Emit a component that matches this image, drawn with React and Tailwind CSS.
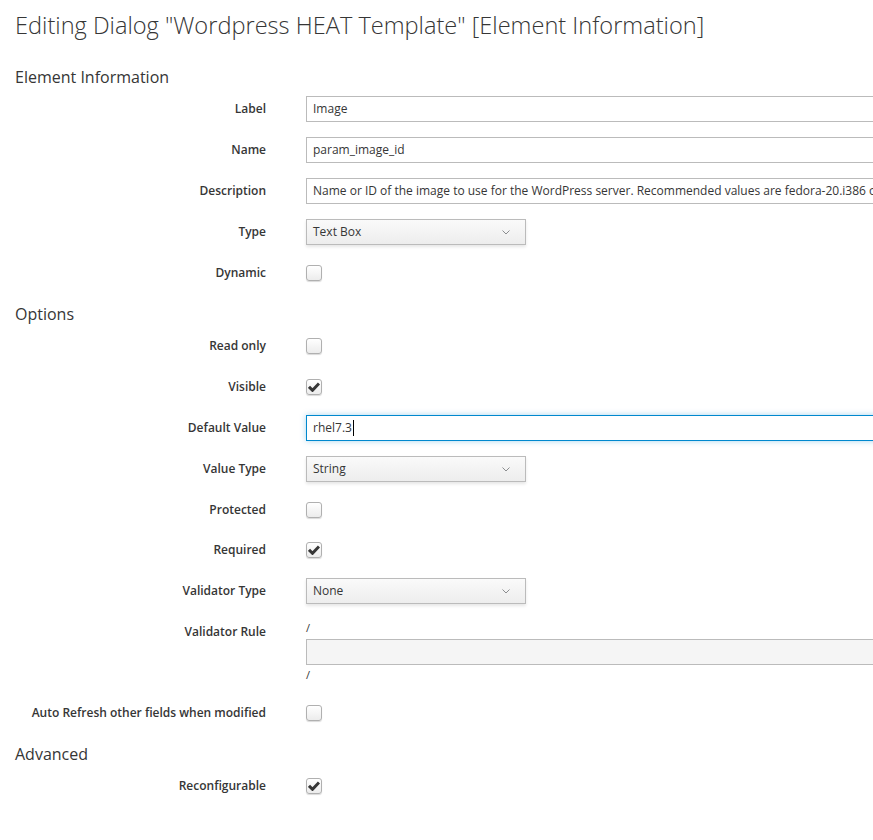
import React from "react";

const font = { fontFamily: '"Open Sans", "Noto Sans", sans-serif' };

function Row({ label, children, tight }) {
  return (
    <div className={tight ? "flex items-center h-[26px] mb-[14px]" : "flex items-center h-[26px] mb-[15px]"}>
      <div className="w-[251px] shrink-0 text-right text-[12px] font-semibold text-[#363636]">
        {label}
      </div>
      <div className="ml-[40px] flex items-center">{children}</div>
    </div>
  );
}

function Section({ title }) {
  return (
    <div className="h-[26px] mb-[6px] flex items-center text-[16px] text-[#363636]">
      {title}
    </div>
  );
}

function TextInput({ value }) {
  return (
    <div className="w-[700px] h-[26px] border border-[#bbbbbb] bg-white px-[6px] flex items-center text-[12px] text-[#363636] whitespace-nowrap overflow-hidden">
      {value}
    </div>
  );
}

function Select({ value }) {
  return (
    <div className="w-[220px] h-[26px] border border-[#bbbbbb] bg-gradient-to-b from-[#fafafa] to-[#ededed] shadow-[0_2px_3px_rgba(3,3,3,0.1)] px-[6px] flex items-center justify-between text-[12px] text-[#363636]">
      <span>{value}</span>
      <svg width="8" height="5" viewBox="0 0 8 5" className="mr-[9px]">
        <path d="M0.5 0.5 L4 4 L7.5 0.5" fill="none" stroke="#8b8d8f" strokeWidth="1" />
      </svg>
    </div>
  );
}

function Checkbox({ checked }) {
  return (
    <div className="w-[16px] h-[16px] rounded-[3px] border border-[#b0b0b0] bg-gradient-to-b from-white to-[#ececec] shadow-[0_1px_1px_rgba(0,0,0,0.15)] flex items-center justify-center">
      {checked && (
        <svg width="12" height="10" viewBox="0 0 12 10">
          <path d="M1 4.8 L4.5 8.3 L11 1.5" fill="none" stroke="#363636" strokeWidth="3" strokeLinejoin="miter" />
        </svg>
      )}
    </div>
  );
}

export default function App() {
  return (
    <div className="w-[873px] overflow-hidden bg-white min-h-[840px] pl-[15px]" style={font}>
      <div className="h-[36px] mt-[8px] mb-[20px] flex items-center text-[23.6px] font-light text-[#363636] whitespace-nowrap">
        Editing Dialog "Wordpress HEAT Template" [Element Information]
      </div>

      <Section title="Element Information" />
      <Row label="Label"><TextInput value="Image" /></Row>
      <Row label="Name"><TextInput value="param_image_id" /></Row>
      <Row label="Description">
        <TextInput value="Name or ID of the image to use for the WordPress server. Recommended values are fedora-20.i386 or fedora-20.x86_64" />
      </Row>
      <Row label="Type"><Select value="Text Box" /></Row>
      <Row label="Dynamic"><Checkbox /></Row>

      <Section title="Options" />
      <Row label="Read only"><Checkbox /></Row>
      <Row label="Visible"><Checkbox checked /></Row>
      <Row label="Default Value">
        <div className="w-[700px] h-[26px] border border-[#0088ce] bg-white px-[6px] flex items-center text-[12px] text-[#363636] shadow-[0_0_6px_rgba(0,136,206,0.35)]">
          rhel7.3
          <span className="w-px h-[16px] bg-black ml-[1px]" />
        </div>
      </Row>
      <Row label="Value Type"><Select value="String" /></Row>
      <Row label="Protected" tight><Checkbox /></Row>
      <Row label="Required"><Checkbox checked /></Row>
      <Row label="Validator Type"><Select value="None" /></Row>

      <div className="flex mb-[16px]">
        <div className="w-[251px] shrink-0 h-[26px] flex items-center justify-end text-[12px] font-semibold text-[#363636]">
          Validator Rule
        </div>
        <div className="ml-[40px] flex flex-col">
          <div className="h-[18px] flex items-center text-[11px] text-[#363636]">/</div>
          <div className="mt-[2px] w-[700px] h-[26px] border border-[#bbbbbb] bg-[#f5f5f5]" />
          <div className="mt-[1px] h-[18px] flex items-center text-[11px] text-[#363636]">/</div>
        </div>
      </div>

      <Row label="Auto Refresh other fields when modified"><Checkbox /></Row>

      <Section title="Advanced" />
      <Row label="Reconfigurable"><Checkbox checked /></Row>
    </div>
  );
}
